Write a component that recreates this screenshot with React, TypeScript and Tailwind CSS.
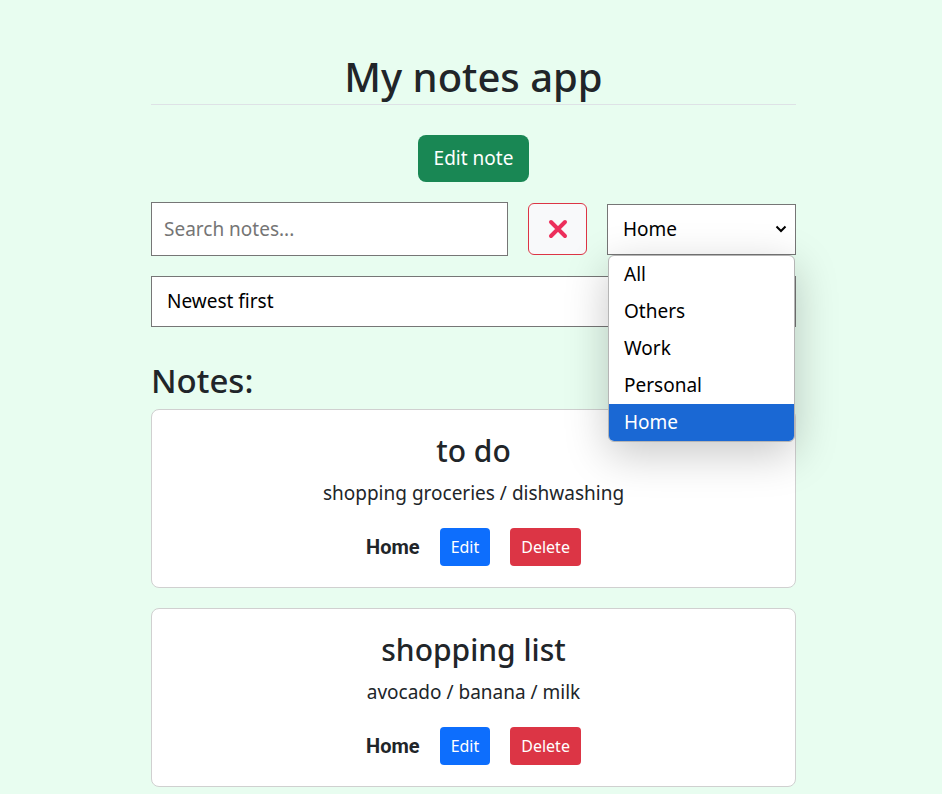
import React from 'react';

type Note = { id: number; title: string; body: string; category: string };

const notes: Note[] = [
  { id: 1, title: 'to do', body: 'shopping groceries / dishwashing', category: 'Home' },
  { id: 2, title: 'shopping list', body: 'avocado / banana / milk', category: 'Home' },
];

const categories = ['All', 'Others', 'Work', 'Personal', 'Home'];

export default function App() {
  return (
    <div className="min-h-screen bg-[#e8fdf0] text-[#212529] font-['Noto_Sans',sans-serif]">
      <div className="w-[645px] ml-[151px] pt-[50px] pb-10">
        <h1 className="text-[40px] leading-[54px] font-medium text-center border-b border-[#dee2e6]">My notes app</h1>

        <div className="flex justify-center mt-[30px]">
          <button className="h-[47px] px-4 rounded-lg bg-[#198754] text-white text-[19px]">Edit note</button>
        </div>

        {/* Search / filter row */}
        <div className="flex items-center gap-5 mt-5">
          <input
            type="text"
            placeholder="Search notes..."
            className="w-[357px] h-[54px] border border-[#767676] bg-white px-3 text-[19px] placeholder:text-[#757575] outline-none"
          />
          <button className="w-[59px] h-[52px] rounded-md border border-[#dc3545] bg-[#f8f9fa] flex items-center justify-center">
            <svg width="22" height="22" viewBox="0 0 22 22">
              <path d="M4 4 L18 18 M18 4 L4 18" stroke="#ec2f5b" strokeWidth="4" strokeLinecap="round" />
            </svg>
          </button>
          <div className="relative flex-1">
            <div className="h-[51px] border border-[#767676] bg-white flex items-center justify-between pl-[15px] pr-2 text-[19px] text-black">
              <span>Home</span>
              <svg width="12" height="8" viewBox="0 0 12 8">
                <path d="M1.5 1.5 L6 6 L10.5 1.5" fill="none" stroke="#000" strokeWidth="2" />
              </svg>
            </div>
            <ul className="absolute z-10 left-px right-px top-[51px] bg-white rounded-md border border-[#b5b5b5] overflow-hidden shadow-[0_12px_44px_rgba(0,0,0,0.22)] text-[19px]">
              {categories.map((c) => (
                <li
                  key={c}
                  className={
                    c === 'Home'
                      ? 'h-[37px] flex items-center px-[15px] bg-[#1a68d4] text-white'
                      : 'h-[37px] flex items-center px-[15px] text-black'
                  }
                >
                  {c}
                </li>
              ))}
            </ul>
          </div>
        </div>

        <div className="mt-5 h-[51px] border border-[#767676] bg-white flex items-center px-[15px] text-[19px] text-black">
          Newest first
        </div>

        <h2 className="mt-[30px] text-[33px] leading-[48px] font-medium">Notes:</h2>

        <div className="flex flex-col gap-5 mt-1">
          {notes.map((n) => (
            <div key={n.id} className="bg-white border border-[#d0d0d0] rounded-lg h-[179px] flex flex-col items-center pt-[21px]">
              <h3 className="text-[30px] leading-10 font-medium">{n.title}</h3>
              <p className="mt-[7px] text-[19px] leading-[30px]">{n.body}</p>
              <div className="flex items-center gap-5 mt-[20px]">
                <span className="font-bold text-[20px] font-['Roboto',sans-serif]">{n.category}</span>
                <button className="h-[38px] px-[11px] rounded bg-[#0d6efd] text-white text-[16px]">Edit</button>
                <button className="h-[38px] px-[11px] rounded bg-[#dc3545] text-white text-[16px]">Delete</button>
              </div>
            </div>
          ))}
        </div>
      </div>
    </div>
  );
}
